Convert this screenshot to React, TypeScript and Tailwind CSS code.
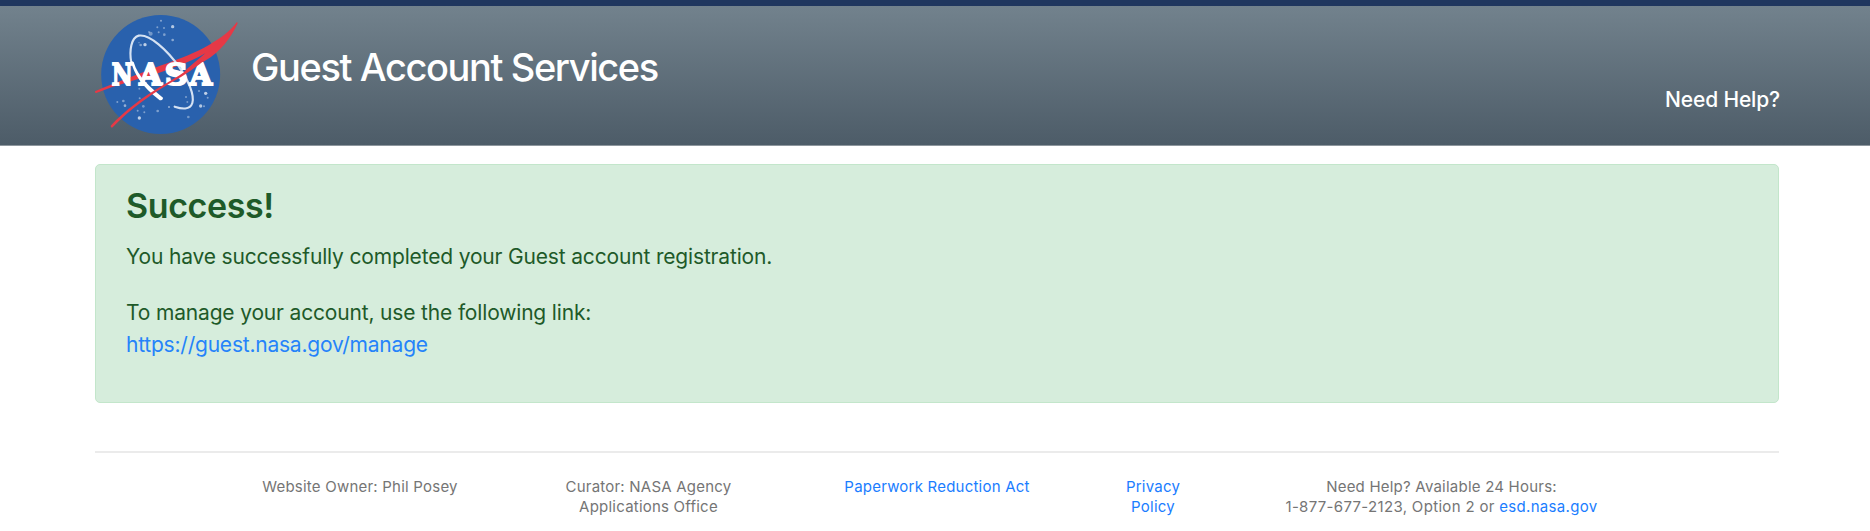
import React from "react";

const stars: [number, number, number, number][] = [
  [243, 62, 3, 0.45], [278, 80, 5, 0.65], [232, 82, 3, 0.4], [252, 84, 3, 0.4], [236, 97, 3, 0.4],
  [253, 104, 4, 0.4], [278, 120, 4, 0.45], [212, 101, 6, 0.35], [207, 96, 3, 0.35], [195, 134, 5, 0.7],
  [182, 135, 4, 0.4], [177, 128, 2, 0.4], [112, 306, 3, 0.4], [130, 303, 4, 0.4], [135, 317, 4, 0.5],
  [179, 295, 3, 0.4], [190, 319, 4, 0.35], [173, 332, 3, 0.4], [193, 337, 3, 0.4], [178, 354, 5, 0.7],
  [233, 333, 4, 0.4], [267, 321, 3, 0.5], [325, 351, 4, 0.35], [377, 280, 5, 0.7], [357, 273, 3, 0.4],
  [383, 293, 3, 0.4], [362, 318, 5, 0.65], [372, 319, 3, 0.4], [318, 291, 3, 0.4], [322, 306, 3, 0.35],
  [178, 266, 3, 0.35],
];

const letters = [
  { c: "N", x: 95, w: 63 },
  { c: "A", x: 178, w: 68 },
  { c: "S", x: 254, w: 69 },
  { c: "A", x: 329, w: 67 },
];

function Logo() {
  return (
    <svg viewBox="45 39 432 366" className="h-[122px] w-[144px] shrink-0" role="img" aria-label="NASA">
      <circle cx="242" cy="223.500" r="178.500" fill="#2961ad" />
      {stars.map(([x, y, r, o], i) => (
        <circle key={i} cx={x} cy={y} r={r} fill="#fff" opacity={o} />
      ))}
      <path
        d="M45 274C110 245 180 221 240 197C300 176 351 156 388 134C423 114 451 94 470 67Q474 66 472 72C452 114 421 156 374 183C350 196 329 209 306 222C328 199 355 179 376 160C325 189 277 204 225 223C163 241 108 256 49 279Q44 279 45 274Z"
        fill="#e63946"
      />
      <path
        d="M154 189C147 150 154 113 176 107C209 101 262 151 297 200C325 240 344 286 337 309C330 331 305 327 284 320"
        fill="none"
        stroke="#d5e2f3"
        strokeWidth="6.500"
        strokeLinecap="round"
      />
      <path d="M153 182C160 220 185 258 239 301Q249 301 249 293C211 262 174 231 161 186Z" fill="#fff" />
      {letters.map((l, i) => (
        <text
          key={i}
          x={l.x}
          y="256"
          textLength={l.w}
          lengthAdjust="spacingAndGlyphs"
          fill="#fff"
          stroke="#fff"
          strokeWidth="6"
          className="font-['DejaVu_Serif',serif] text-[89px] font-bold"
        >
          {l.c}
        </text>
      ))}
      <path
        d="M92 377C132 334 190 289 246 257C290 232 342 202 378 159C391 153 398 151 402 151C376 184 340 207 303 231C219 277 151 326 98 382Q92 385 92 377Z"
        fill="#e63946"
      />
    </svg>
  );
}

export default function App() {
  return (
    <div className="h-[531px] overflow-hidden bg-white font-['Inter',sans-serif]">
      <header className="h-[146px] border-t-6 border-b border-t-[#20375f] border-b-[#8e979e] bg-linear-to-b from-[#72828d] to-[#4d5c68]">
        <div className="ml-[95px] flex w-[1685px] items-start justify-between">
          <div className="flex items-start gap-3 pt-[7px]">
            <Logo />
            <h1 className="mt-8 text-[38px] leading-[45px] font-medium tracking-[-1.4px] whitespace-nowrap text-white">
              Guest Account Services
            </h1>
          </div>
          <a href="#" className="mt-[78px] text-[21px] leading-8 font-medium tracking-[-0.15px] text-white">
            Need Help?
          </a>
        </div>
      </header>

      <main className="ml-[95px] w-[1684px] pt-[18px]">
        <section className="h-[239px] rounded-[5px] border border-[#c3e6cb] bg-[#d6eddc] px-[30px] pt-[21px] text-[21px] leading-8 tracking-[-0.165px] text-[#1e5a29]">
          <h2 className="text-[34px] leading-10 font-semibold tracking-[-0.4px]">Success!</h2>
          <p className="mt-[15px]">You have successfully completed your Guest account registration.</p>
          <p className="mt-6">
            To manage your account, use the following link:
            <br />
            <a href="#" className="tracking-[-0.22px] text-[#2583fa]">
              https://guest.nasa.gov/manage
            </a>
          </p>
        </section>

        <footer className="mt-12 flex justify-center border-t-2 border-[#ebebeb] pt-6 text-center text-[15px] leading-5 tracking-[0.22px] text-[#757575]">
          <div className="w-[288px]">Website Owner: Phil Posey</div>
          <div className="w-[289px]">
            Curator: NASA Agency
            <br />
            Applications Office
          </div>
          <div className="w-[288px] text-[#1a7dff]">Paperwork Reduction Act</div>
          <div className="w-[144px] text-[#1a7dff]">
            Privacy
            <br />
            Policy
          </div>
          <div className="w-[433px]">
            Need Help? Available 24 Hours:
            <br />
            <span className="tracking-[0.32px]">
              1-877-677-2123, Option 2 or{" "}
              <a href="#" className="text-[#1a7dff]">
                esd.nasa.gov
              </a>
            </span>
          </div>
        </footer>
      </main>
    </div>
  );
}
